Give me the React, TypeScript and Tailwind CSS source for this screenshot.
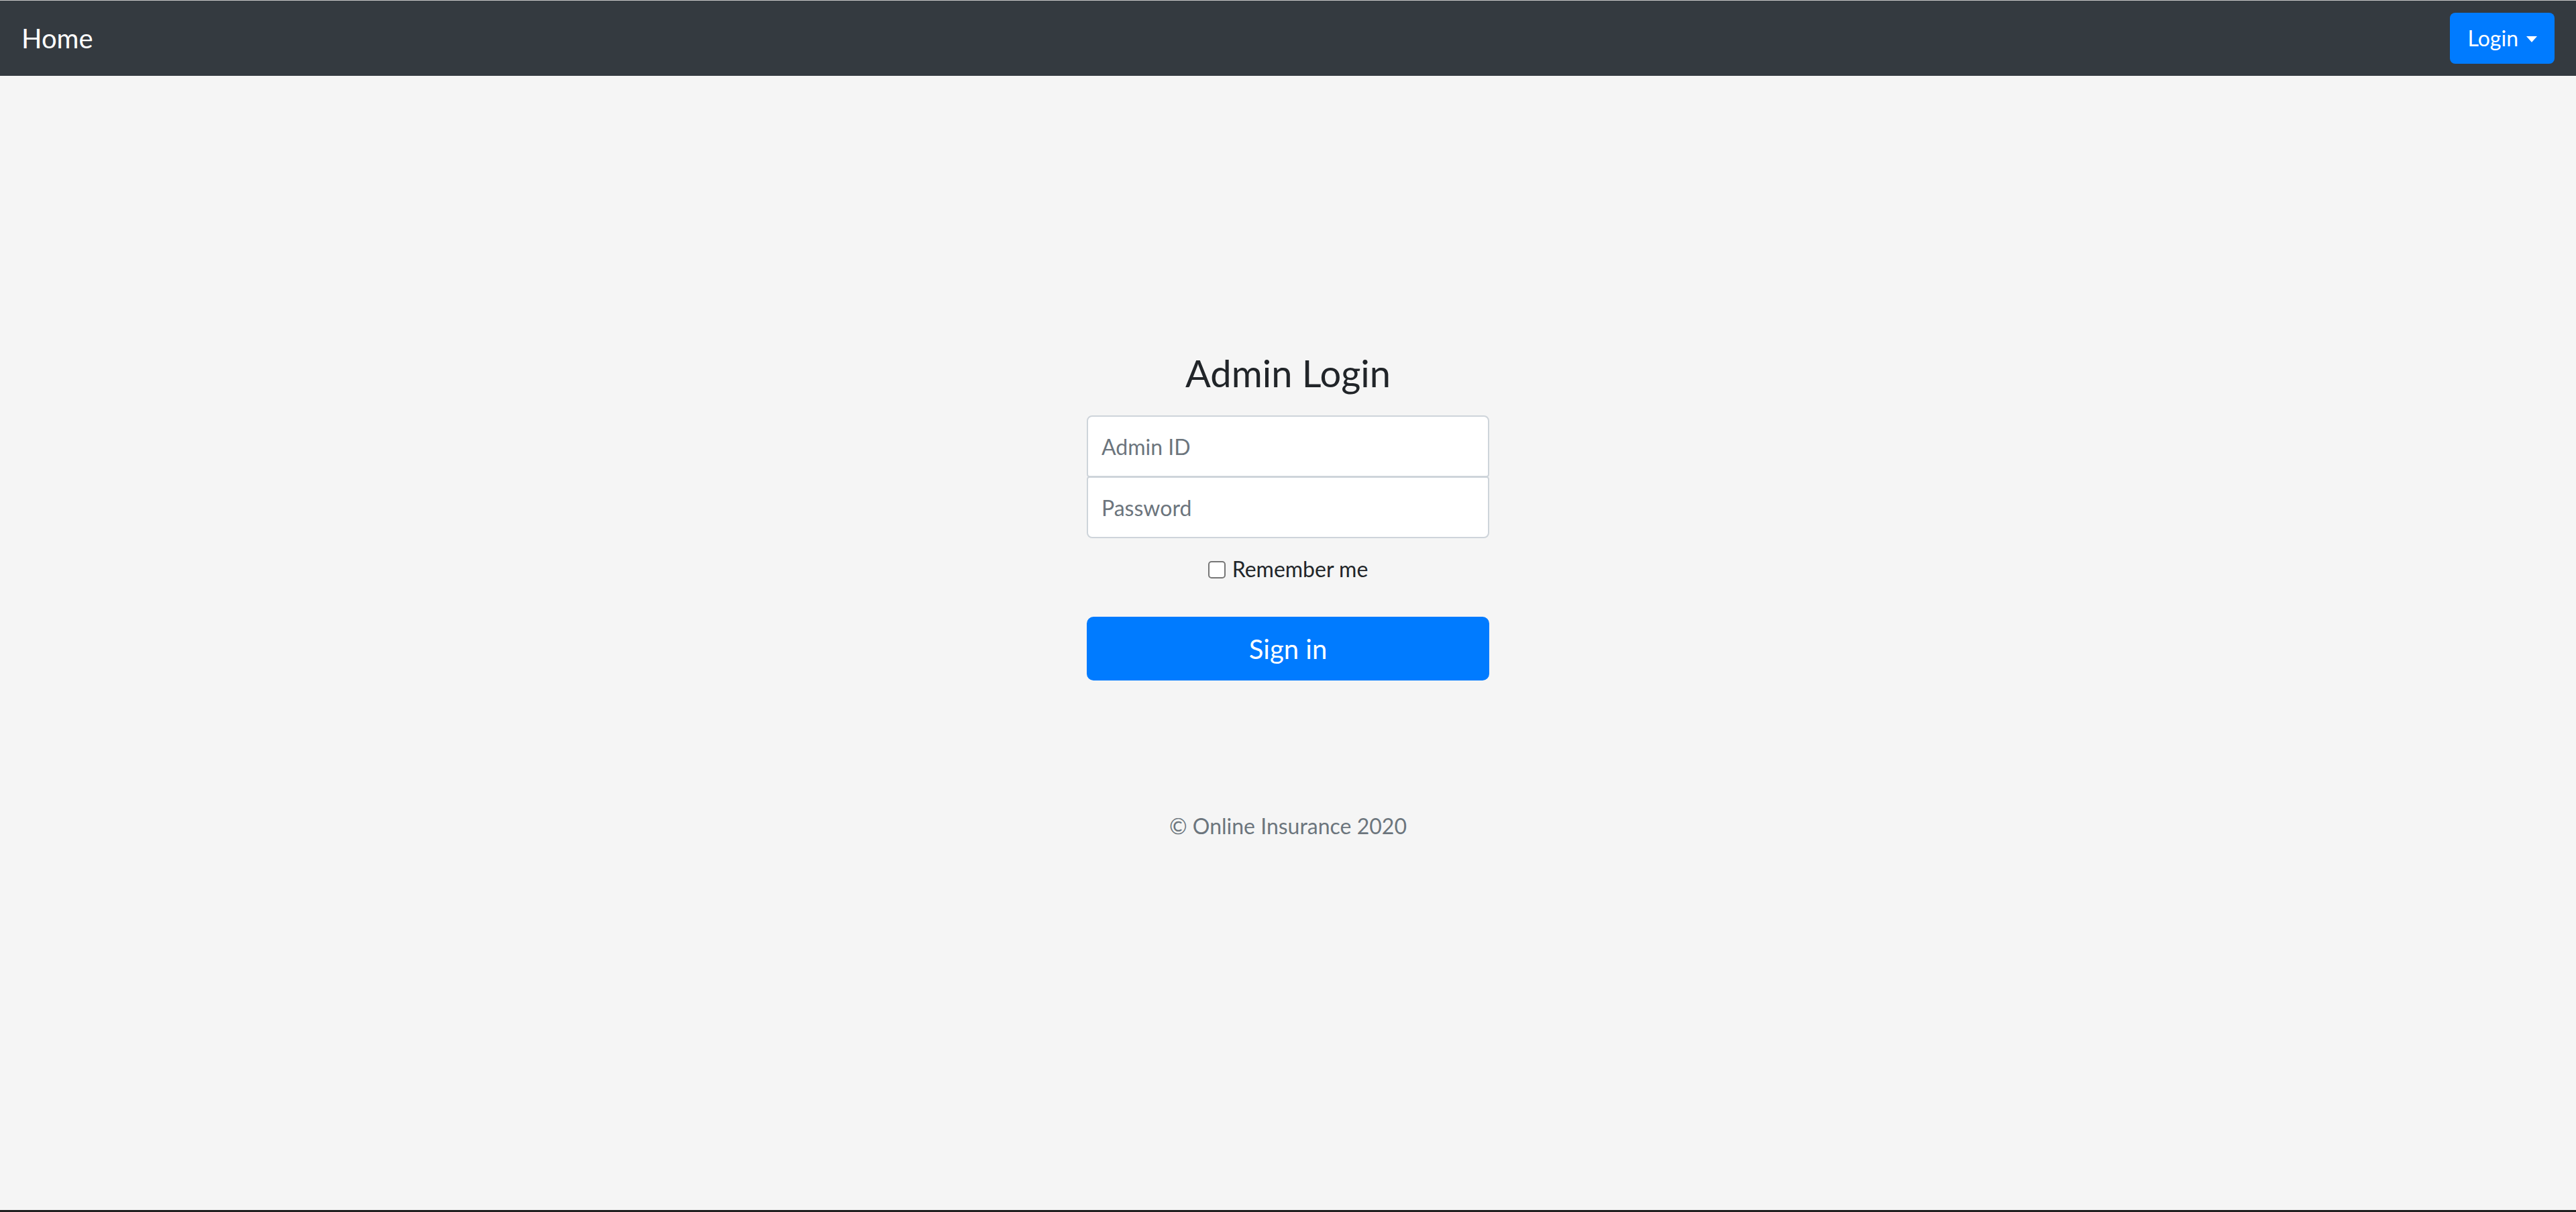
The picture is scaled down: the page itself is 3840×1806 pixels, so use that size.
import { useState } from 'react';

export default function App() {
  const [remember, setRemember] = useState(false);

  return (
    <div className="h-screen flex flex-col bg-[#f5f5f5] font-['Lato','Noto_Sans',sans-serif] overflow-hidden">
      <div className="h-px bg-[#c9c9c9]" />

      {/* Navbar */}
      <nav className="h-[112px] shrink-0 bg-[#343a40] flex items-center justify-between px-8">
        <a href="#" className="text-[40px] leading-[60px] text-white">
          Home
        </a>
        <button className="h-[76px] px-[26px] rounded-[8px] bg-[#007bff] text-white text-[32px] flex items-center gap-[12px]">
          <span>Login</span>
          <span className="w-0 h-0 border-l-[8px] border-r-[8px] border-t-[9px] border-l-transparent border-r-transparent border-t-white mt-[2px]" />
        </button>
      </nav>

      {/* Sign in form */}
      <main className="flex-1 flex justify-center">
        <form className="w-[600px] pt-[409px] flex flex-col items-center" onSubmit={(e) => e.preventDefault()}>
          <h3 className="text-[56px] leading-[1.2] text-[#212529] mb-[30px]">Admin Login</h3>

          <input
            type="text"
            placeholder="Admin ID"
            className="w-full h-[92px] px-[20px] text-[32px] bg-white border-2 border-[#ced4da] rounded-t-[8px] rounded-b-[4px] text-[#495057] placeholder:text-[#6c757d] outline-none"
          />
          <input
            type="password"
            placeholder="Password"
            className="w-full h-[92px] -mt-px px-[20px] text-[32px] bg-white border-2 border-[#ced4da] rounded-b-[8px] rounded-t-[4px] text-[#495057] placeholder:text-[#6c757d] outline-none"
          />

          <label className="mt-[22px] flex items-center gap-[10px] text-[32px] leading-[48px] text-[#212529] cursor-pointer">
            <span
              onClick={() => setRemember(!remember)}
              className={`w-[26px] h-[26px] mt-[2px] rounded-[5px] border-2 border-[#767676] ${remember ? 'bg-[#007bff]' : 'bg-white'}`}
            />
            Remember me
          </label>

          <button
            type="submit"
            className="mt-[47px] w-full h-[95px] rounded-[10px] bg-[#007bff] text-white text-[40px]"
          >
            Sign in
          </button>

          <p className="mt-[193px] text-[32px] leading-[48px] text-[#6c757d]">© Online Insurance 2020</p>
        </form>
      </main>

      <div className="h-[3px] shrink-0 bg-[#202020]" />
    </div>
  );
}
